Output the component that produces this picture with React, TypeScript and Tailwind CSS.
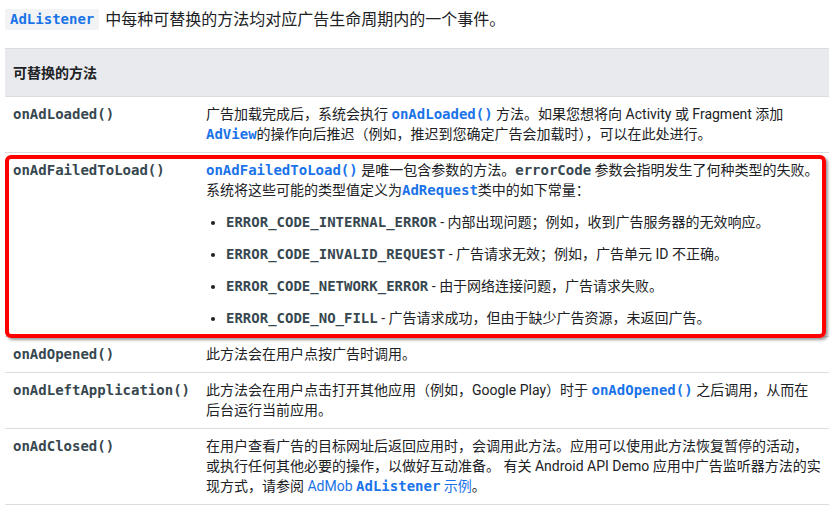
import type { ReactNode } from 'react'

const sans = "font-['Roboto','Noto_Sans_CJK_SC',sans-serif]"
const mono = "font-['DejaVu_Sans_Mono','Liberation_Mono',monospace]"

function Code({ children }: { children: ReactNode }) {
  return <code className={`${mono} text-[14px] font-bold text-[#37474f]`}>{children}</code>
}

function LinkCode({ children }: { children: ReactNode }) {
  return <code className={`${mono} text-[14px] font-bold text-[#1a73e8]`}>{children}</code>
}

function Row({ method, children, highlight }: { method: string; children: ReactNode; highlight?: boolean }) {
  return (
    <div className="relative flex border-b border-[#dadce0]">
      <div className="w-[193px] shrink-0 px-2 pt-[7px] pb-[8px]">
        <Code>{method}</Code>
      </div>
      <div className="flex-1 px-2 pt-[7px] pb-[8px]">{children}</div>
      {highlight && (
        <div className="pointer-events-none absolute top-[2px] -bottom-[2px] left-0 right-[3px] rounded-[6px] border-4 border-[#ff0000] shadow-[2px_2px_3px_rgba(0,0,0,0.4)]" />
      )}
    </div>
  )
}

const errors = [
  ['ERROR_CODE_INTERNAL_ERROR', '内部出现问题；例如，收到广告服务器的无效响应。'],
  ['ERROR_CODE_INVALID_REQUEST', '广告请求无效；例如，广告单元 ID 不正确。'],
  ['ERROR_CODE_NETWORK_ERROR', '由于网络连接问题，广告请求失败。'],
  ['ERROR_CODE_NO_FILL', '广告请求成功，但由于缺少广告资源，未返回广告。'],
]

export default function App() {
  return (
    <div className={`${sans} h-[520px] w-[840px] bg-white pl-[5px] pr-[11px] text-[14px] leading-[20px] text-[#202124]`}>
      {/* Intro */}
      <div className="flex h-[48px] items-start pt-[9px]">
        <span className="rounded-[2px] bg-[#f1f3f4] px-[5px] leading-[21px]">
          <code className={`${mono} text-[14px] font-bold text-[#1a73e8]`}>AdListener</code>
        </span>
        <span className="ml-[6px] text-[16px] leading-[21px]">中每种可替换的方法均对应广告生命周期内的一个事件。</span>
      </div>

      {/* Table */}
      <div>
        <div className="flex h-[49px] items-center border-y border-[#dadce0] bg-[#e8eaed] px-2 font-bold">
          可替换的方法
        </div>

        <Row method="onAdLoaded()">
          广告加载完成后，系统会执行 <LinkCode>onAdLoaded()</LinkCode> 方法。如果您想将向 Activity 或 Fragment 添加
          <br />
          <LinkCode>AdView</LinkCode>的操作向后推迟（例如，推迟到您确定广告会加载时），可以在此处进行。
        </Row>

        <Row method="onAdFailedToLoad()" highlight>
          <div>
            <LinkCode>onAdFailedToLoad()</LinkCode> 是唯一包含参数的方法。<Code>errorCode</Code> 参数会指明发生了何种类型的失败。
            <br />
            系统将这些可能的类型值定义为<LinkCode>AdRequest</LinkCode>类中的如下常量：
          </div>
          <ul className="mt-3 list-disc pl-[20px]">
            {errors.map(([code, desc]) => (
              <li key={code} className="mt-3 first:mt-0">
                <Code>{code}</Code> - {desc}
              </li>
            ))}
          </ul>
        </Row>

        <Row method="onAdOpened()">此方法会在用户点按广告时调用。</Row>

        <Row method="onAdLeftApplication()">
          此方法会在用户点击打开其他应用（例如，Google Play）时于 <LinkCode>onAdOpened()</LinkCode> 之后调用，从而在
          <br />
          后台运行当前应用。
        </Row>

        <Row method="onAdClosed()">
          在用户查看广告的目标网址后返回应用时，会调用此方法。应用可以使用此方法恢复暂停的活动，
          <br />
          或执行任何其他必要的操作，以做好互动准备。 有关 Android API Demo 应用中广告监听器方法的实
          <br />
          现方式，请参阅 <span className="text-[#1a73e8]">AdMob</span> <LinkCode>AdListener</LinkCode>{' '}
          <span className="text-[#1a73e8]">示例</span>。
        </Row>
      </div>
    </div>
  )
}
